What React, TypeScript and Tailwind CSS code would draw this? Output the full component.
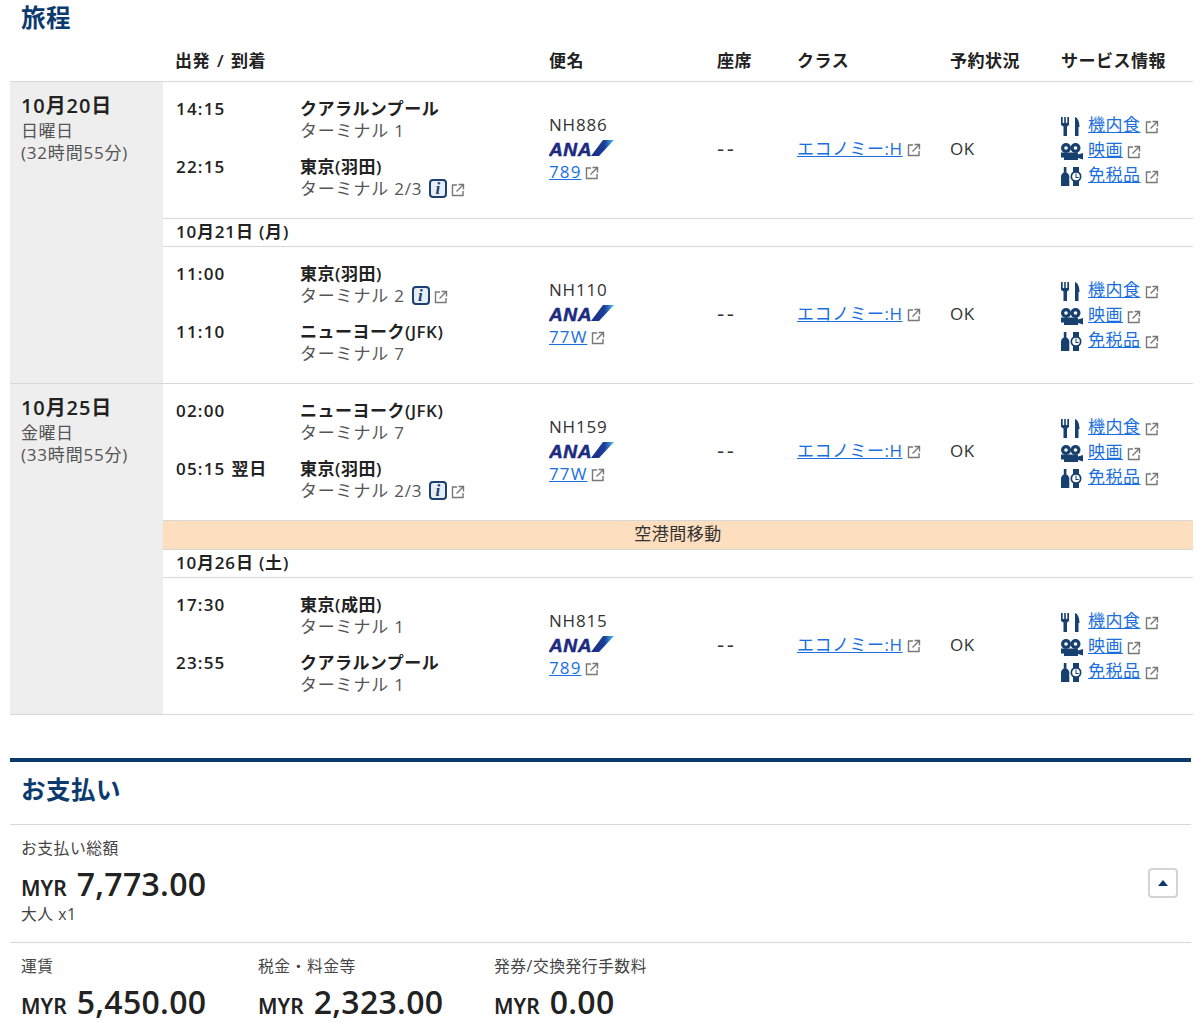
import React from "react";

const font = "font-['Open_Sans','Noto_Sans_CJK_JP',sans-serif]";

function ExtIcon() {
  return (
    <svg width="14" height="14" viewBox="0 0 14 14" className="inline-block shrink-0" fill="none" stroke="#777" strokeWidth="1.4">
      <path d="M6 2H1.500v10.500H12V8" />
      <path d="M5.500 8.500 12 2M7.500 1.500h5v5" />
    </svg>
  );
}

function InfoIcon() {
  return (
    <span className="inline-flex h-[19px] w-[18px] items-center justify-center rounded-[4px] border-2 border-[#1d3f72] bg-[#e6edf7] font-['Liberation_Serif',serif] text-[17px] font-bold italic leading-none text-[#1d3f72]">
      i
    </span>
  );
}

function AnaLogo() {
  return (
    <div className="flex h-[23px] items-center">
      <svg width="66" height="23" viewBox="0 0 66 23">
        <defs>
          <linearGradient id="ana-wing" x1="0" y1="0" x2="1" y2="0">
            <stop offset="0" stopColor="#1c2a80" />
            <stop offset="0.6" stopColor="#1c3f9c" />
            <stop offset="1" stopColor="#4fc3f0" />
          </linearGradient>
        </defs>
        <text x="0" y="19" fontFamily="Liberation Sans, sans-serif" fontWeight="700" fontStyle="italic" fontSize="18" fill="#1c2a80" stroke="#1c2a80" strokeWidth="0.5" textLength="43" lengthAdjust="spacingAndGlyphs">
          ANA
        </text>
        <polygon points="42,19 54,3 65,3 50,19" fill="url(#ana-wing)" />
      </svg>
    </div>
  );
}

function MealIcon() {
  return (
    <svg width="19" height="19" viewBox="0 0 19 19" fill="#17406f">
      <path d="M0 0h1.700v6h1.500V0h1.600v6h1.500V0H8v8l-2 1.500V19H2.500V9.500L0 8z" />
      <path d="M14 0c3 1 4.500 5 4.500 10h-1v9H14z" />
    </svg>
  );
}

function MovieIcon() {
  return (
    <svg width="23" height="17" viewBox="0 0 23 17" fill="#17406f" className="-ml-[1px]">
      <circle cx="6" cy="5" r="5" />
      <circle cx="15.500" cy="5" r="5" />
      <circle cx="6" cy="5" r="1.800" fill="#fff" />
      <circle cx="15.500" cy="5" r="1.800" fill="#fff" />
      <path d="M1 9.500h17v2l5-1.500v6.500L18 15v2H4v-2.500H1z" />
    </svg>
  );
}

function DutyFreeIcon() {
  return (
    <svg width="21" height="19" viewBox="0 0 21 19" fill="#17406f">
      <path d="M2.800 0h2.600v5.500C7.500 6.500 8.300 8 8.300 10v9H0v-9c0-2 .8-3.500 2.800-4.500z" />
      <rect x="12" y="0" width="6" height="5" />
      <rect x="12" y="14" width="6" height="5" />
      <circle cx="15" cy="9.500" r="5.500" />
      <circle cx="15" cy="9.500" r="3.800" fill="#fff" />
      <path d="M14.500 6.500h1v3.500h2.200v1h-3.200z" />
    </svg>
  );
}

function ServiceLink({ icon, label }: { icon: React.ReactNode; label: string }) {
  return (
    <div className="flex h-[25px] items-center">
      <span className="mt-[3px] flex w-[27px] shrink-0 items-center">{icon}</span>
      <a className="text-[#1a6fe0] underline">{label}</a>
      <span className="ml-[4px] mt-[3px] flex">
        <ExtIcon />
      </span>
    </div>
  );
}

type Stop = { time: string; next?: boolean; name: string; terminal: string; info?: boolean };

function StopRow({ stop }: { stop: Stop }) {
  return (
    <div className="grid grid-cols-[124px_249px]">
      <div className="h-[23px] font-semibold tracking-[1.200px]">
        {stop.time}
        {stop.next && <span className="ml-[6px] tracking-[0.700px]">翌日</span>}
      </div>
      <div>
        <div className="h-[23px] font-semibold">{stop.name}</div>
        <div className="flex h-[23px] items-center tracking-[0.800px] text-[#555]">
          <span>{stop.terminal}</span>
          {stop.info && (
            <span className="ml-[7px] flex">
              <InfoIcon />
            </span>
          )}
          {stop.terminal.includes("2") && (
            <span className="ml-[4px] mt-[2px] flex">
              <ExtIcon />
            </span>
          )}
        </div>
      </div>
    </div>
  );
}

function Segment({ from, to, flight, plane }: { from: Stop; to: Stop; flight: string; plane: string }) {
  return (
    <div className="grid h-[136px] grid-cols-[373px_168px_80px_153px_111px_1fr] items-center pl-[13px]">
      <div className="flex flex-col gap-[12px] pb-[4px]">
        <StopRow stop={from} />
        <StopRow stop={to} />
      </div>
      <div className="pb-[3px]">
        <div className="h-[23px] leading-[21px] tracking-[0.800px] text-[#333]">{flight}</div>
        <AnaLogo />
        <div className="mt-[1px] flex h-[23px] items-center tracking-[1.100px]">
          <a className="text-[#1a6fe0] underline">{plane}</a>
          <span className="ml-[4px] mt-[2px] flex">
            <ExtIcon />
          </span>
        </div>
      </div>
      <div className="pb-[3px] font-['DejaVu_Sans',sans-serif] text-[20px] tracking-[2.500px] text-[#333]">--</div>
      <div className="flex items-center pb-[3px]">
        <a className="text-[#1a6fe0] underline">エコノミー:H</a>
        <span className="ml-[4px] mt-[2px] flex">
          <ExtIcon />
        </span>
      </div>
      <div className="pb-[3px] text-[#333]">OK</div>
      <div>
        <ServiceLink icon={<MealIcon />} label="機内食" />
        <ServiceLink icon={<MovieIcon />} label="映画" />
        <ServiceLink icon={<DutyFreeIcon />} label="免税品" />
      </div>
    </div>
  );
}

function DateRow({ label }: { label: string }) {
  return (
    <div className="flex h-[28px] items-center border-b border-[#d8d8d8] pb-[2px] pl-[13px] font-semibold tracking-[0.800px]">{label}</div>
  );
}

function DayCell({ date, day, duration }: { date: string; day: string; duration: string }) {
  return (
    <div className="w-[153px] shrink-0 bg-[#eeeeee] pl-[11px] pt-[11px]">
      <div className="text-[20px] font-semibold leading-[26px] tracking-[0.900px]">{date}</div>
      <div className="h-[23px] leading-[23px] text-[#555]">{day}</div>
      <div className="h-[23px] leading-[21px] tracking-[0.800px] text-[#555]">{duration}</div>
    </div>
  );
}

function Amount({ value }: { value: string }) {
  return (
    <div className="flex items-baseline font-semibold leading-[40px] text-[#222]">
      <span className="mr-[10px] font-['Noto_Sans',sans-serif] text-[21px] tracking-normal">MYR</span>
      <span className="text-[32px] tracking-[0.300px]">{value}</span>
    </div>
  );
}

function Fee({ label, value }: { label: string; value: string }) {
  return (
    <div>
      <div className="text-[15.800px] leading-[24px] text-[#444]">{label}</div>
      <div className="mt-[4px]">
        <Amount value={value} />
      </div>
    </div>
  );
}

export default function App() {
  return (
    <div className={`${font} h-[1023px] w-[1200px] overflow-hidden bg-white pl-[10px] text-[17px] tracking-[0.500px] text-[#222]`}>
      <div className="w-[1183px]">
        <h2 className="h-[42px] pl-[11px] pt-[1px] text-[24.500px] font-bold leading-[34px] text-[#0b3a6e]">旅程</h2>

        <div className="grid h-[40px] grid-cols-[165px_374px_168px_80px_153px_111px_1fr] items-center border-b border-[#d8d8d8] pb-[2px] font-semibold">
          <div />
          <div className="[word-spacing:2px]">出発 / 到着</div>
          <div>便名</div>
          <div>座席</div>
          <div>クラス</div>
          <div>予約状況</div>
          <div>サービス情報</div>
        </div>

        <div className="flex border-b border-[#d8d8d8]">
          <DayCell date="10月20日" day="日曜日" duration="(32時間55分)" />
          <div className="flex-1">
            <div className="border-b border-[#d8d8d8]">
              <Segment
                from={{ time: "14:15", name: "クアラルンプール", terminal: "ターミナル 1" }}
                to={{ time: "22:15", name: "東京(羽田)", terminal: "ターミナル 2/3", info: true }}
                flight="NH886"
                plane="789"
              />
            </div>
            <DateRow label="10月21日 (月)" />
            <Segment
              from={{ time: "11:00", name: "東京(羽田)", terminal: "ターミナル 2", info: true }}
              to={{ time: "11:10", name: "ニューヨーク(JFK)", terminal: "ターミナル 7" }}
              flight="NH110"
              plane="77W"
            />
          </div>
        </div>

        <div className="flex border-b border-[#d8d8d8]">
          <DayCell date="10月25日" day="金曜日" duration="(33時間55分)" />
          <div className="flex-1">
            <Segment
              from={{ time: "02:00", name: "ニューヨーク(JFK)", terminal: "ターミナル 7" }}
              to={{ time: "05:15", next: true, name: "東京(羽田)", terminal: "ターミナル 2/3", info: true }}
              flight="NH159"
              plane="77W"
            />
            <div className="flex h-[30px] items-center justify-center border-y border-[#d8d8d8] bg-[#fddebf] pb-[2px] text-[#333]">空港間移動</div>
            <DateRow label="10月26日 (土)" />
            <Segment
              from={{ time: "17:30", name: "東京(成田)", terminal: "ターミナル 1" }}
              to={{ time: "23:55", name: "クアラルンプール", terminal: "ターミナル 1" }}
              flight="NH815"
              plane="789"
            />
          </div>
        </div>
      </div>

      <div className="mt-[43px] w-[1181px] border-t-[4px] border-[#0b3a6e]">
        <h2 className="flex h-[63px] items-center border-b border-[#d8d8d8] pb-[6px] pl-[11px] text-[24.500px] font-bold text-[#0b3a6e]">お支払い</h2>
        <div className="flex h-[118px] items-center justify-between border-b border-[#d8d8d8] pl-[11px] pr-[13px]">
          <div className="pb-[7px]">
            <div className="text-[15.800px] leading-[24px] text-[#444]">お支払い総額</div>
            <div className="mt-[4px]">
              <Amount value="7,773.00" />
            </div>
            <div className="-mt-[4px] text-[15.800px] leading-[20px] text-[#444]">大人 x1</div>
          </div>
          <button className="mb-[2px] flex h-[30px] w-[30px] items-center justify-center rounded-[4px] border-2 border-[#d4d4d4] bg-white">
            <span className="h-0 w-0 border-x-[5.500px] border-b-[6px] border-x-transparent border-b-[#0b3a6e]" />
          </button>
        </div>
        <div className="grid grid-cols-[236px_236px_1fr] pl-[11px] pt-[11px]">
          <Fee label="運賃" value="5,450.00" />
          <div className="pl-[1px]">
            <Fee label="税金・料金等" value="2,323.00" />
          </div>
          <div className="pl-[1px]">
            <Fee label="発券/交換発行手数料" value="0.00" />
          </div>
        </div>
      </div>
    </div>
  );
}
